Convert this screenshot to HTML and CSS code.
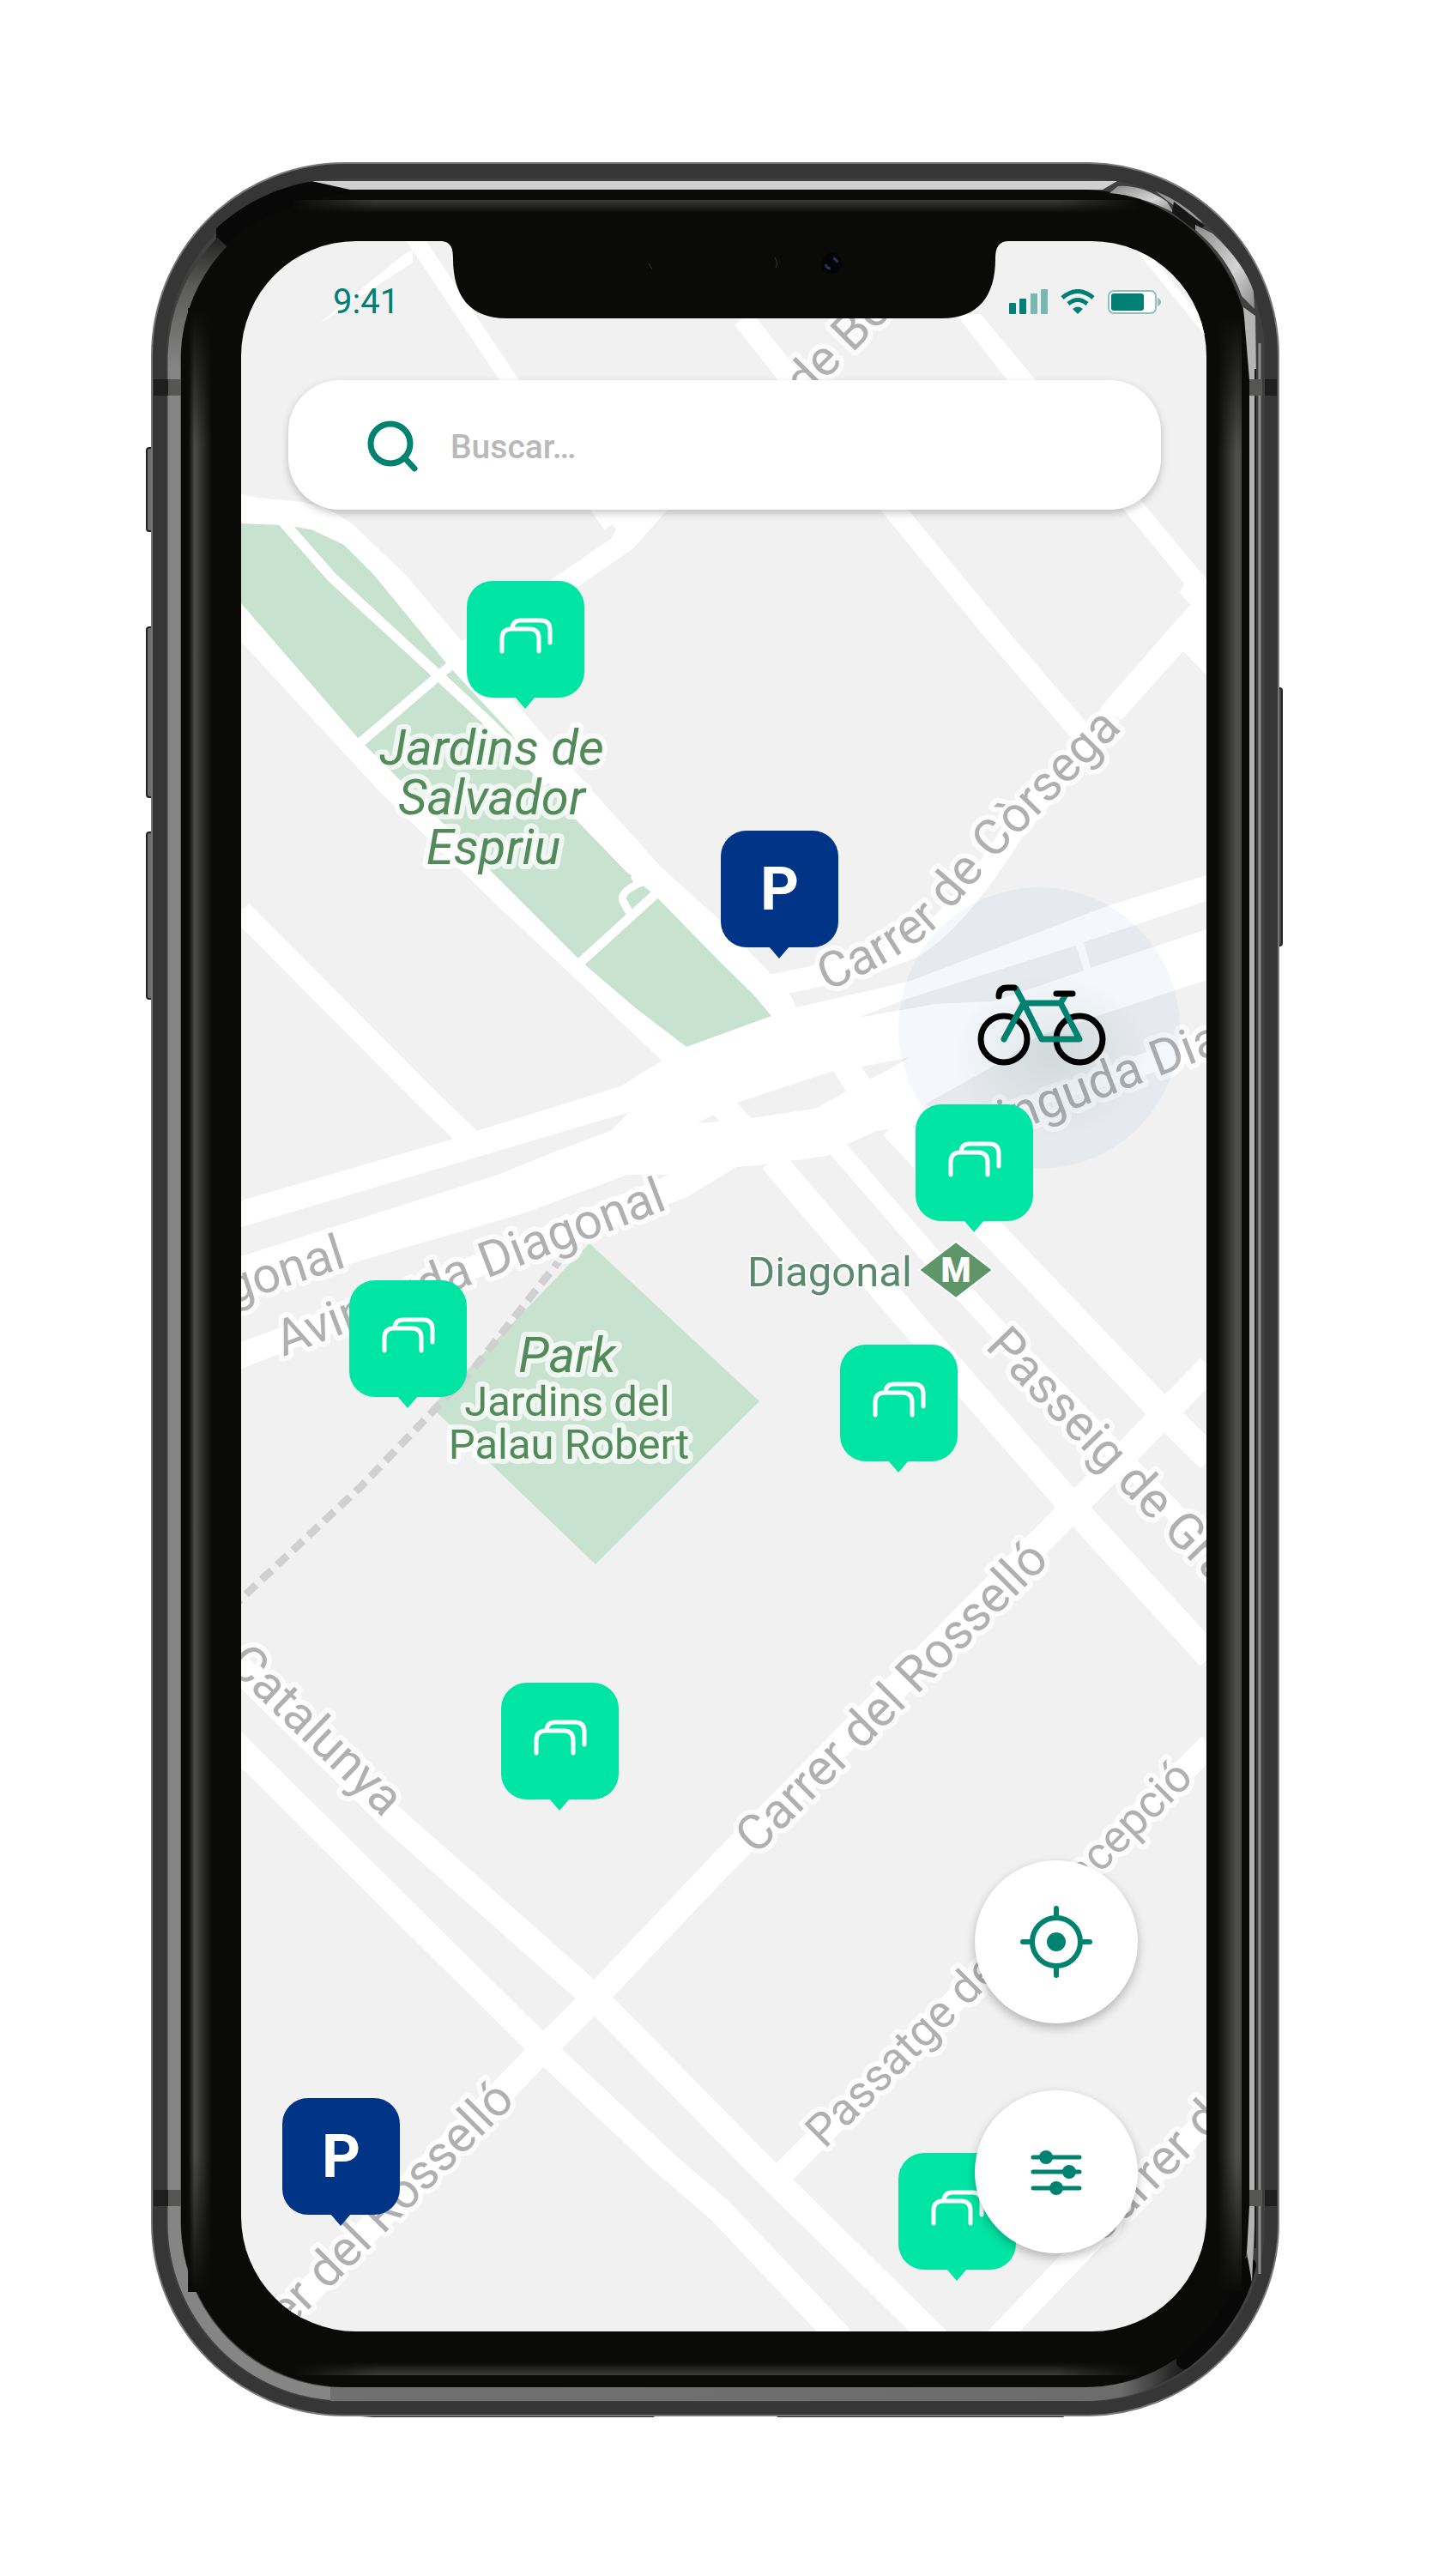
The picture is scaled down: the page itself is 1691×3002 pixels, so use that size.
FILE: index.html
```html
<!DOCTYPE html>
<html lang="es">
<head>
<meta charset="utf-8">
<meta name="viewport" content="width=device-width, initial-scale=1">
<title>Mapa de aparcamientos</title>
<link rel="stylesheet" href="styles.css">
</head>
<body>
<main class="stage">
<div class="phone">
  <svg class="phone-frame" viewBox="170 189 1325 2630" aria-hidden="true">
    <defs>
      <linearGradient id="sheenLeft" x1="0" y1="0" x2="1" y2="0">
        <stop offset="0" stop-color="#0a0a08"/><stop offset=".25" stop-color="#4c4c4c"/><stop offset="1" stop-color="#0a0a08"/>
      </linearGradient>
      <linearGradient id="sheenRight" x1="0" y1="0" x2="1" y2="0">
        <stop offset="0" stop-color="#0a0a08"/><stop offset=".8" stop-color="#505050"/><stop offset="1" stop-color="#484848"/>
      </linearGradient>
      <linearGradient id="sheenTop" x1="0" y1="0" x2="0" y2="1">
        <stop offset="0" stop-color="#3c3c3c"/><stop offset="1" stop-color="#0a0a08"/>
      </linearGradient>
      <linearGradient id="sheenBottom" x1="0" y1="0" x2="0" y2="1">
        <stop offset="0" stop-color="#0a0a08"/><stop offset="1" stop-color="#3c3c3c"/>
      </linearGradient>
      <linearGradient id="fadeY" x1="0" y1="0" x2="0" y2="1">
        <stop offset="0" stop-color="#0a0a08"/><stop offset=".07" stop-color="#0a0a08" stop-opacity="0"/>
        <stop offset=".93" stop-color="#0a0a08" stop-opacity="0"/><stop offset="1" stop-color="#0a0a08"/>
      </linearGradient>
      <linearGradient id="fadeX" x1="0" y1="0" x2="1" y2="0">
        <stop offset="0" stop-color="#0a0a08"/><stop offset=".1" stop-color="#0a0a08" stop-opacity="0"/>
        <stop offset=".9" stop-color="#0a0a08" stop-opacity="0"/><stop offset="1" stop-color="#0a0a08"/>
      </linearGradient>
      <linearGradient id="leftBand" gradientUnits="userSpaceOnUse" x1="0" y1="270" x2="0" y2="430">
        <stop offset="0" stop-color="#1c1c1c"/><stop offset=".4" stop-color="#5c5c5a"/><stop offset="1" stop-color="#858585"/>
      </linearGradient>
      <linearGradient id="bottomBand" gradientUnits="userSpaceOnUse" x1="401" y1="0" x2="1385" y2="0">
        <stop offset="0" stop-color="#707070"/><stop offset=".92" stop-color="#6c6c6c"/><stop offset="1" stop-color="#141414"/>
      </linearGradient>
      <linearGradient id="cornerGlow" x1="0" y1="0" x2="1" y2="1">
        <stop offset="0" stop-color="#8c8c8c"/><stop offset=".6" stop-color="#d4d4d4"/><stop offset="1" stop-color="#8a8a8a"/>
      </linearGradient>
    </defs>
    <g fill="#6e6e6e" stroke="#222" stroke-width="2">
      <rect x="171" y="522" width="10" height="97" rx="3"/>
      <rect x="171" y="731" width="10" height="198" rx="3"/>
      <rect x="171" y="970" width="10" height="194" rx="3"/>
      <rect x="1484" y="802" width="10" height="300" rx="3" fill="#4a4a4a"/>
    </g>
    <path d="M600 2805H770L762 2817H420Z M900 2805H1230L1240 2817H906Z" fill="#2e2e2e"/>
    <rect x="177" y="190" width="1313" height="2625" rx="224" fill="#363636" stroke="#777" stroke-width="2"/>
    <rect x="194" y="208" width="1280" height="2591" rx="207" fill="#404040"/>
    <rect x="211" y="221" width="1245" height="2561" rx="193" fill="#0a0a08"/>
    <path d="M252 266Q300 222 365 211L420 223Q320 232 252 292Z" fill="#080808"/>
    <path d="M259 282A198 198 0 0 0 203 414V2590A198 200 0 0 0 401 2790" fill="none" stroke="url(#leftBand)" stroke-width="15"/>
    <path d="M385 2790H1265A196 196 0 0 0 1385 2749" fill="none" stroke="url(#bottomBand)" stroke-width="16"/>
    <path d="M1380 2752Q1440 2705 1455 2640" fill="none" stroke="#080808" stroke-width="18" stroke-linecap="round"/>
    <path d="M363 211H1302L1285 221H408Z" fill="#d0d0d0"/>
    <path d="M1293 225L1303 217Q1330 215 1360 235L1368 248Q1330 228 1293 225Z" fill="url(#cornerGlow)"/>
    <path d="M1347 223Q1380 236 1402 260Q1374 246 1347 223Z" fill="#9a9a9a"/>
    <path d="M1368 235L1404 263L1395 270L1366 248Z" fill="#161616"/>
    <path d="M1393 262L1413 272Q1450 306 1461 340L1462 360L1447 345Q1432 300 1393 268Z" fill="url(#cornerGlow)"/>
    <path d="M1449 358L1463 368L1464 442H1456Z" fill="#b4b4b4"/>
    <path d="M1456 461H1463V2552H1456ZM1456 2571H1463L1459 2660L1453 2625Z" fill="#b2b2b2"/>
    <path d="M1463 430V2620" stroke="#1c1c1c" stroke-width="2"/>
    <path d="M1468 400V2650" stroke="#8c8c8c" stroke-width="3"/>
    <rect x="220" y="360" width="27" height="2310" fill="url(#sheenLeft)"/>
    <rect x="219" y="359" width="29" height="2312" fill="url(#fadeY)"/>
    <rect x="1419" y="370" width="28" height="2300" fill="url(#sheenRight)"/>
    <rect x="1418" y="369" width="30" height="2302" fill="url(#fadeY)"/>
    <rect x="343" y="233" width="985" height="15" fill="url(#sheenTop)"/>
    <rect x="342" y="232" width="987" height="17" fill="url(#fadeX)"/>
    <rect x="343" y="2753" width="985" height="15" fill="url(#sheenBottom)"/>
    <rect x="342" y="2752" width="987" height="17" fill="url(#fadeX)"/>
    <g fill="#565654">
      <rect x="196" y="442" width="15" height="19"/><rect x="196" y="2552" width="15" height="19"/>
      <rect x="1456" y="442" width="15" height="19"/><rect x="1456" y="2552" width="15" height="19"/>
    </g>
    <g fill="#1e1e1e">
      <rect x="179" y="442" width="17" height="19"/><rect x="179" y="2552" width="17" height="19"/>
      <rect x="1474" y="442" width="14" height="19"/><rect x="1474" y="2552" width="14" height="19"/>
    </g>
  </svg>

  <div class="screen">
    <div class="map">
      <svg class="map-canvas" viewBox="281 281 1125 2436" role="img" aria-label="Mapa">
        <defs>
          <path id="corsegaPath" d="M963 1155Q1046 1121 1092 1080Q1134 1030 1172 988L1340 817"/>
          <radialGradient id="bikeGlow"><stop offset="0" stop-color="#00402a" stop-opacity=".09"/><stop offset="1" stop-color="#00402a" stop-opacity="0"/></radialGradient>
        </defs>
        <rect x="281" y="281" width="1125" height="2436" fill="#f1f1f1"/>

        <!-- Upper streets -->
        <g fill="none" stroke="#fff">
          <path d="M478 270L593 442L712 612" stroke-width="19"/>
          <path d="M866 371L1042 594L1162 740L1265 860" stroke-width="25"/>
          <path d="M770 585L730 630L530 768" stroke-width="24"/>
          <path d="M1325 285L1410 390" stroke-width="10"/>
          <path d="M281 1062L498 1280L560 1340" stroke-width="26"/>
        </g>
        <path d="M481 291V306L372 377L470 297Z" fill="#fff"/>
        <path d="M700 594H778L727 646L705 640L718 617Z" fill="#fff"/>
        <path d="M1114 366H1143L1206 442L1333 587L1406 675V787L1379 759L1307 839L1282 825L1356 740L1387 705L1375 691L1380 680L1313 598L1173 442Z" fill="#fff"/>
        <path d="M1295 832L1180 970Q1110 1080 1060 1105Q1000 1130 890 1150" fill="none" stroke="#fff" stroke-width="26"/>

        <!-- Avinguda Diagonal and the roads round the gardens -->
        <path d="M281 576L300 580L352 585L380 592L410 610L472 669L538 747L679 909L771 1011L840 1073L898 1135L923 1162L928 1174L1061 1143L1293 1055L1406 1020V1232L1150 1306L1061 1312L1021 1318L991 1332L964 1347L920 1353L882 1358L858 1360L801 1395L281 1595V1399L529 1327L562 1316L723 1266L771 1236L668 1138L576 1052L442 922L281 748Z" fill="#fff"/>
        <g fill="#f1f1f1">
          <path d="M281 1430L733 1296L713 1317L637 1346L580 1369L281 1464Z"/>
          <path d="M281 1510L613 1413L731 1369H780L560 1460L281 1564Z"/>
          <path d="M1000 1186L1060 1163L1254 1102L1263 1131L1190 1156L1157 1167L1090 1170Z"/>
          <path d="M1263 1098L1406 1050V1083L1271 1128Z"/>
          <path d="M859 1285L971 1248L986 1272L950 1292L875 1303Z"/>
          <path d="M1004 1243L1061 1232L1014 1258Z"/>
          <path d="M813 1309L831 1299L839 1307Z"/>
          <path d="M923 1162L1010 1138L1061 1135V1143L928 1174Z"/>
          <path d="M1078 1287L1171 1235L1210 1207L1406 1142V1200L1120 1306Z"/>
        </g>

        <!-- Jardins de Salvador Espriu -->
        <path d="M281 610L330 612L363 617L401 635L435 669L521 774L595 854L672 956L729 1015L764 1044L840 1122L878 1159L899 1184L800 1220L741 1175L679 1122L515 958L417 860L281 703Z" fill="#c8e2d0"/>
        <g fill="none" stroke="#fff">
          <path d="M328 606L387 673L513 789L568 840L640 912" stroke-width="12"/>
          <path d="M417 868L528 773M676 1122L766 1040" stroke-width="11"/>
          <path d="M739 1020L744 1030Q722 1040 726 1050L735 1066" stroke-width="9"/>
        </g>

        <!-- Eixample grid -->
        <g fill="none" stroke="#fff">
          <path d="M900 1352L1063 1542L1251 1757L1410 1931" stroke-width="31"/>
          <path d="M976 1338L1090 1470L1165 1552L1410 1805" stroke-width="22"/>
          <path d="M1041 1312L1150 1430L1350 1640L1410 1700" stroke-width="32"/>
          <path d="M1410 1593L1251 1757L840 2173L693 2328L633 2388L281 2752" stroke-width="30"/>
          <path d="M270 2028L458 2215L633 2388L774 2520L840 2577L980 2725" stroke-width="30"/>
          <path d="M270 1935L458 2120L693 2328L882 2520L1092 2727" stroke-width="31"/>
          <path d="M905 2540L1410 2033" stroke-width="27"/>
          <path d="M1160 2727L1410 2466" stroke-width="27"/>
        </g>

        <!-- Jardins del Palau Robert -->
        <path d="M687 1449L885 1633L694 1823L503 1640Z" fill="#c8e2d0"/>
        <path d="M656 1464L552 1595L420 1733L277 1867" fill="none" stroke="#d0d0d0" stroke-width="9" stroke-dasharray="16 9"/>

        <g class="street">
          <text transform="translate(938 467) rotate(-45)">de Bon</text>
          <text><textPath href="#corsegaPath">Carrer de Còrsega</textPath></text>
          <text transform="translate(1112 1346) rotate(-21)">Avinguda Diagonal</text>
          <text transform="translate(405 1476) rotate(-18)" text-anchor="end">Diagonal</text>
          <text transform="translate(330 1581) rotate(-21)">Avinguda Diagonal</text>
          <text transform="translate(1147 1570) rotate(46)">Passeig de Gràcia</text>
          <text transform="translate(447 2119) rotate(44)" text-anchor="end">Catalunya</text>
          <text transform="translate(881 2163) rotate(-45)">Carrer del Rosselló</text>
          <text transform="translate(602 2449) rotate(-45)" text-anchor="end">Carrer del Rosselló</text>
          <text transform="translate(1282 2617) rotate(-45)">Carrer de</text>
          <text class="lane" transform="translate(961 2505) rotate(-45)">Passatge de la Concepció</text>
        </g>
        <g class="park" text-anchor="middle">
          <text class="park-name" x="573" y="891">Jardins de</text>
          <text class="park-name" x="573" y="949">Salvador</text>
          <text class="park-name" x="575" y="1007">Espriu</text>
          <text class="park-name" x="661" y="1599">Park</text>
          <text x="661" y="1650">Jardins del</text>
          <text x="663" y="1700">Palau Robert</text>
        </g>
        <text class="station" x="871" y="1499">Diagonal</text>
        <path d="M1114 1447L1157 1480L1114 1513L1071 1480Z" fill="#5f9669" stroke="#fff" stroke-width="2"/>
        <text class="metro" x="1114" y="1494" text-anchor="middle">M</text>

        <circle cx="1211" cy="1198" r="164" fill="#0a4da0" fill-opacity=".045"/>
        <ellipse cx="1225" cy="1230" rx="115" ry="95" fill="url(#bikeGlow)"/>
        <g fill="none" stroke-width="7" stroke-linecap="round" stroke-linejoin="round">
          <circle cx="1170" cy="1211" r="27" stroke="#000"/>
          <circle cx="1258" cy="1211" r="27" stroke="#000"/>
          <path d="M1170 1211L1193 1169H1236L1258 1211H1214L1193 1169L1184 1152M1236 1169L1242 1159" stroke="#008271"/>
          <path d="M1164 1161Q1164 1151 1174 1151H1182M1231 1158H1250" stroke="#000"/>
        </g>
      </svg>

      <button class="pin pin-bike pin-1" type="button" aria-label="Estación"><svg viewBox="0 0 137 136"><use href="#rack"/></svg></button>
      <button class="pin pin-parking pin-2" type="button">P</button>
      <button class="pin pin-bike pin-3" type="button" aria-label="Estación"><svg viewBox="0 0 137 136"><use href="#rack"/></svg></button>
      <button class="pin pin-bike pin-4" type="button" aria-label="Estación"><svg viewBox="0 0 137 136"><use href="#rack"/></svg></button>
      <button class="pin pin-bike pin-5" type="button" aria-label="Estación"><svg viewBox="0 0 137 136"><use href="#rack"/></svg></button>
      <button class="pin pin-bike pin-6" type="button" aria-label="Estación"><svg viewBox="0 0 137 136"><use href="#rack"/></svg></button>
      <button class="pin pin-parking pin-7" type="button">P</button>
      <button class="pin pin-bike pin-8" type="button" aria-label="Estación"><svg viewBox="0 0 137 136"><use href="#rack"/></svg></button>
      <svg class="symbols" aria-hidden="true">
        <symbol id="rack" viewBox="0 0 137 136">
          <path d="M41 82V67Q41 56 52 56H73Q84 56 84 67V82M53 56Q53 46 63 46H86Q97 46 97 57V72" fill="none" stroke="#fff" stroke-width="5" stroke-linecap="round"/>
        </symbol>
      </svg>
    </div>

    <svg class="notch" viewBox="500 281 690 91" aria-hidden="true">
      <path d="M505 280V281H513C526 281 528 290 528 302C528 345 548 371 590 371H1098C1140 371 1160 345 1160 302C1160 288 1164 281 1176 281V280Z" fill="#0a0a08"/>
      <circle cx="969" cy="307" r="12" fill="#050507"/>
      <path d="M962 308A7 7 0 0 0 968 313M971 301A7 7 0 0 1 976 306" fill="none" stroke="#24345f" stroke-width="3"/>
      <path d="M903 300Q907 306 904 312M756 307L760 314" fill="none" stroke="#333" stroke-width="1"/>
    </svg>

    <header class="status">
      <time class="clock">9:41</time>
      <div class="status-icons">
        <svg width="45" height="30" viewBox="0 0 45 30" fill="#008075" aria-hidden="true">
          <rect y="16" width="8" height="13" rx="1"/><rect x="12" y="11" width="8" height="18" rx="1"/>
          <g opacity=".5"><rect x="25" y="5" width="8" height="24" rx="1"/><rect x="37" width="8" height="29" rx="1"/></g>
        </svg>
        <svg width="40" height="30" viewBox="0 0 40 30" aria-hidden="true">
          <path d="M2 10Q20-5 38 10M9 17Q20 8 31 17" fill="none" stroke="#008075" stroke-width="5"/>
          <path d="M14 23Q20 18 26 23L20 29Z" fill="#008075"/>
        </svg>
        <svg width="62" height="30" viewBox="0 0 62 30" aria-hidden="true">
          <rect x="1" y="2" width="55" height="26" rx="6" fill="#fff" stroke="#8fbfb9" stroke-width="2"/>
          <rect x="4" y="5" width="38" height="20" rx="3" fill="#008075"/>
          <path d="M58 10Q62 12 62 15T58 20Z" fill="#8fbfb9"/>
        </svg>
      </div>
    </header>

    <label class="search">
      <svg width="64" height="64" viewBox="0 0 64 64" aria-hidden="true">
        <path d="M45 46L57 59" stroke="#008271" stroke-width="7" stroke-linecap="round"/>
        <circle cx="29" cy="30" r="23" fill="none" stroke="#008271" stroke-width="7"/>
      </svg>
      <input type="text" placeholder="Buscar…" aria-label="Buscar">
    </label>

    <div class="actions">
      <button class="fab" type="button" aria-label="Mi ubicación">
        <svg width="96" height="96" viewBox="0 0 96 96">
          <g fill="none" stroke="#008271" stroke-width="6" stroke-linecap="round">
            <circle cx="48" cy="48" r="28"/>
            <path d="M48 9V18M48 78V87M9 48H18M78 48H87"/>
          </g>
          <circle cx="48" cy="48" r="11" fill="#008271"/>
        </svg>
      </button>
      <button class="fab" type="button" aria-label="Filtros">
        <svg width="96" height="96" viewBox="0 0 96 96">
          <path d="M21 31H75M21 48H75M21 67H75" stroke="#008271" stroke-width="5" stroke-linecap="round"/>
          <g fill="#008271"><circle cx="36" cy="31" r="8"/><circle cx="63" cy="48" r="8"/><circle cx="48" cy="67" r="8"/></g>
        </svg>
      </button>
    </div>
  </div>
</div>
</main>
</body>
</html>
```
FILE: styles.css
```css
* {
  box-sizing: border-box;
}

body {
  margin: 0;
  background: #fff;
  font-family: Roboto, "Liberation Sans", sans-serif;
}

button {
  padding: 0;
  border: 0;
  font-family: inherit;
  cursor: pointer;
}

.stage {
  display: flex;
  justify-content: center;
  padding: 189px 26px 183px 0;
}

.phone {
  position: relative;
  flex: none;
  padding: 92px 89px 102px 111px;
}

.phone-frame {
  position: absolute;
  inset: 0;
  width: 100%;
  height: 100%;
}

.screen {
  position: relative;
  display: flex;
  flex-direction: column;
  width: 1125px;
  aspect-ratio: 1125 / 2436;
  padding: 0 53px 91px 55px;
  border-radius: 134px;
  overflow: hidden;
}

.map,
.map-canvas {
  position: absolute;
  inset: 0;
  width: 100%;
  height: 100%;
}

.street,
.park,
.station {
  paint-order: stroke;
  stroke: rgba(255, 255, 255, 0.7);
  stroke-width: 12px;
  stroke-linejoin: round;
}

.street {
  font-size: 58px;
  fill: #b0b0b0;
}

.lane {
  font-size: 53px;
}

.park {
  font-size: 49px;
  fill: #528b59;
}

.park-name {
  font-size: 58px;
  font-style: italic;
}

.station {
  font-size: 49px;
  fill: #5a8a6e;
  stroke-width: 4px;
}

.metro {
  font-size: 40px;
  font-weight: 900;
  fill: #fff;
}

.symbols {
  position: absolute;
  width: 0;
  height: 0;
}

.pin {
  position: absolute;
  width: 137px;
  height: 136px;
  border-radius: 30px;
  color: #fff;
  font-size: 70px;
  font-weight: 700;
  line-height: 134px;
}

.pin::after {
  content: "";
  position: absolute;
  top: 100%;
  left: 56px;
  margin-top: -1px;
  border: 12px solid transparent;
  border-top: 14px solid #00e5a4;
  border-bottom: 0;
}

.pin svg {
  display: block;
  width: 137px;
  height: 136px;
}

.pin-bike {
  background: #00e5a4;
}

.pin-parking {
  background: #003486;
}

.pin-parking::after {
  border-top-color: #003486;
}

.pin-1 { left: 263px; top: 396px; }
.pin-2 { left: 559px; top: 687px; }
.pin-3 { left: 786px; top: 1006px; }
.pin-4 { left: 126px; top: 1211px; }
.pin-5 { left: 698px; top: 1286px; }
.pin-6 { left: 303px; top: 1680px; }
.pin-7 { left: 48px; top: 2164px; }
.pin-8 { left: 766px; top: 2228px; }

.notch {
  position: absolute;
  top: 0;
  left: 219px;
  width: 690px;
  height: 91px;
}

.status {
  position: relative;
  display: flex;
  align-items: center;
  justify-content: space-between;
  height: 142px;
  margin-bottom: 20px;
  padding-left: 52px;
  color: #008075;
}

.clock {
  font-size: 40px;
  line-height: 48px;
}

.status-icons {
  display: flex;
  gap: 15px;
}

.search {
  position: relative;
  display: flex;
  align-items: center;
  gap: 35px;
  height: 151px;
  padding: 0 60px 0 90px;
  border-radius: 60px;
  background: #fff;
  box-shadow: 0 4px 10px rgba(0, 0, 0, 0.22);
}

.search svg {
  flex: none;
}

.search input {
  flex: 1;
  min-width: 0;
  padding: 4px 0 0;
  border: 0;
  outline: 0;
  background: none;
  color: #444;
  font-family: inherit;
  font-size: 39px;
  font-weight: 500;
  line-height: 48px;
}

.search input::placeholder {
  color: #b9b9b9;
  opacity: 1;
}

.actions {
  position: relative;
  display: flex;
  flex-direction: column;
  gap: 78px;
  align-self: flex-end;
  margin-top: auto;
  margin-right: 27px;
}

.fab {
  display: grid;
  place-items: center;
  width: 190px;
  height: 190px;
  border-radius: 50%;
  background: #fff;
  box-shadow: 0 5px 12px rgba(0, 0, 0, 0.26);
}
```
